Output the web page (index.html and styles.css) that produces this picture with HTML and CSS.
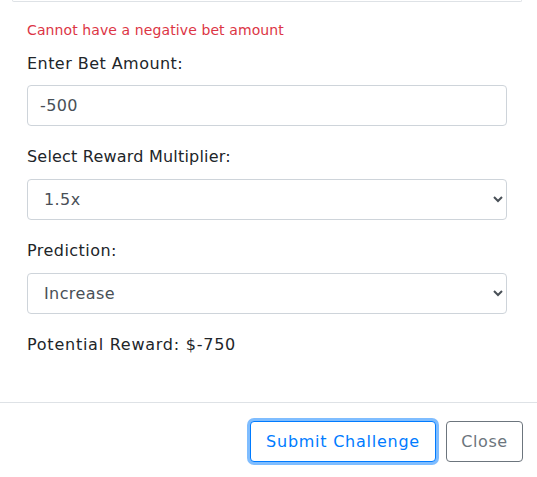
FILE: index.html
```html
<!DOCTYPE html>
<html lang="en">
<head>
<meta charset="utf-8">
<title>Challenge</title>
<link rel="stylesheet" href="styles.css">
</head>
<body>
<div class="modal">
  <div class="prev-edge"></div>
  <div class="modal-body">
    <p class="error">Cannot have a negative bet amount</p>
    <div class="group">
      <label class="label" for="bet">Enter Bet Amount:</label>
      <input class="control" id="bet" type="text" value="-500">
    </div>
    <div class="group">
      <label class="label label-tight" for="mult">Select Reward Multiplier:</label>
      <select class="control select" id="mult">
        <option>1.5x</option>
        <option>2x</option>
      </select>
    </div>
    <div class="group">
      <label class="label" for="pred">Prediction:</label>
      <select class="control select" id="pred">
        <option>Increase</option>
        <option>Decrease</option>
      </select>
    </div>
    <p class="reward">Potential Reward: $-750</p>
  </div>
  <div class="modal-footer">
    <button class="btn btn-primary-outline" type="button">Submit Challenge</button>
    <button class="btn btn-secondary-outline" type="button">Close</button>
  </div>
</div>
</body>
</html>
```
FILE: styles.css
```css
html, body {
  margin: 0;
  padding: 0;
  background: #ffffff;
}
body {
  font-family: "DejaVu Sans", "Open Sans", sans-serif;
  color: #212529;
  width: 537px;
  height: 477px;
  overflow: hidden;
}
.modal {
  display: flex;
  flex-direction: column;
}
.prev-edge {
  height: 1px;
  margin: 0 15px 0 12px;
  border: 1px solid #dee2e6;
  border-top: none;
  border-radius: 0 0 4px 4px;
}
.modal-body {
  padding: 0 30px 0 27px;
  display: flex;
  flex-direction: column;
}
.error {
  margin: 18px 0 0;
  font-size: 14px;
  line-height: 21px;
  letter-spacing: 0.1px;
  color: #dc3545;
}
.group {
  display: flex;
  flex-direction: column;
  margin-bottom: 19px;
}
.error + .group {
  margin-top: 11px;
}
.label {
  font-size: 16px;
  line-height: 24px;
  letter-spacing: 0.45px;
  margin-bottom: 10px;
}
.label-tight {
  letter-spacing: 0.2px;
}
.error + .group .label {
  margin-bottom: 9px;
}
.control {
  box-sizing: border-box;
  width: 480px;
  height: 41px;
  margin: 0;
  padding: 0 12px;
  font-family: inherit;
  font-size: 16px;
  letter-spacing: 0.4px;
  color: #495057;
  background: #ffffff;
  border: 1px solid #ced4da;
  border-radius: 4px;
  outline: none;
}
.reward {
  margin: 0;
  font-size: 16px;
  line-height: 24px;
  letter-spacing: 0.75px;
}
.modal-footer {
  margin-top: 45px;
  border-top: 1px solid #dee2e6;
  display: flex;
  justify-content: flex-end;
  gap: 10px;
  padding: 18px 14px 0 0;
}
.btn {
  box-sizing: border-box;
  height: 41px;
  padding: 0;
  font-family: inherit;
  font-size: 16px;
  letter-spacing: 0.6px;
  background: #ffffff;
  border-radius: 4px;
  cursor: pointer;
}
.btn-primary-outline {
  width: 186px;
  letter-spacing: 0.75px;
  color: #007bff;
  border: 1px solid #007bff;
  box-shadow: 0 0 0 3px rgba(0, 123, 255, 0.5);
}
.btn-secondary-outline {
  width: 77px;
  color: #6c757d;
  border: 1px solid #6c757d;
}
```
